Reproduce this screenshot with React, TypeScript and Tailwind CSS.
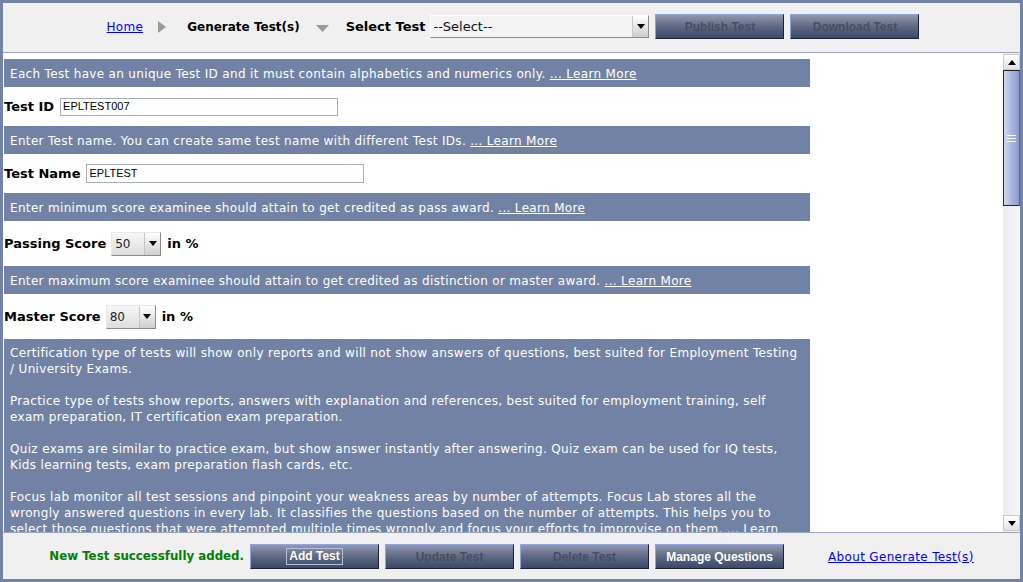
import React from "react";

const FONT = { fontFamily: '"DejaVu Sans", Verdana, sans-serif' };
const BTN_FONT = { fontFamily: '"Liberation Sans", Arial, sans-serif' };

function Btn({ label, enabled, focus }: { label: string; enabled?: boolean; focus?: boolean }) {
  return (
    <div
      style={BTN_FONT}
      className="w-[129px] h-[25px] shrink-0 flex items-center justify-center border border-t-[#8fa3e6] border-l-[#8fa3e6] border-b-[#1c2232] border-r-[#1c2232] bg-gradient-to-b from-[#9399ab] via-[#5f6984] to-[#3b4868] text-[12px] font-bold"
    >
      <span
        className={
          (enabled ? "text-white " : "text-[#474e62] ") +
          (focus ? "border border-[#b9c1da] px-[2px] leading-[15px]" : "")
        }
      >
        {label}
      </span>
    </div>
  );
}

function Arrow({ up }: { up?: boolean }) {
  return (
    <svg width="8" height="5" viewBox="0 0 8 5">
      <polygon points={up ? "0,5 8,5 4,0" : "0,0 8,0 4,5"} fill="#000" />
    </svg>
  );
}

function SmallSelect({ value }: { value: string }) {
  return (
    <div className="w-[50px] h-[24px] shrink-0 flex border border-t-[#e8e8e8] border-l-[#e8e8e8] border-b-[#8a8a8a] border-r-[#8a8a8a] bg-gradient-to-b from-[#f6f6f6] to-[#dedede]">
      <div className="flex-1 pl-[3px] text-[12px] text-[#222] flex items-center">{value}</div>
      <div className="w-[16px] flex items-center justify-center border-l border-[#c4c4c4] bg-gradient-to-b from-white to-[#cfcfcf]">
        <Arrow />
      </div>
    </div>
  );
}

function Bar({ children }: { children: React.ReactNode }) {
  return (
    <div className="ml-[1px] w-[806px] h-[28px] bg-[#7282a5] text-white text-[12px] tracking-[0.33px] flex items-center px-[6px] pt-[1px] whitespace-nowrap">
      {children}
    </div>
  );
}

function LearnMore({ text = "... Learn More" }: { text?: string }) {
  return <span className="underline">{text}</span>;
}

export default function App() {
  return (
    <div style={FONT} className="w-[1023px] h-[582px] bg-[#7383a6] p-[3px] overflow-hidden">
      <div className="w-[1017px] h-[576px] flex flex-col">
        {/* top bar */}
        <div className="h-[50px] shrink-0 bg-[#f0f0f0] border-b border-[#9aa5c2] flex items-center justify-center pb-[2px]">
          <a className="text-[12px] tracking-[0.3px] text-[#0000ff] underline ml-[3px]">Home</a>
          <svg className="ml-[15px]" width="8" height="12" viewBox="0 0 8 12">
            <polygon points="0,0 8,6 0,12" fill="#9a9a9a" />
          </svg>
          <span className="ml-[21px] text-[12px] font-bold text-black">Generate Test(s)</span>
          <svg className="ml-[16px] mt-[3px]" width="13" height="7" viewBox="0 0 13 7">
            <polygon points="0,0 13,0 6.5,7" fill="#9a9a9a" />
          </svg>
          <span className="ml-[17px] text-[13px] font-bold text-black">Select Test</span>
          <div className="ml-[5px] w-[219px] h-[23px] flex border border-t-[#ffffff] border-l-[#ffffff] border-b-[#8c8c8c] border-r-[#8c8c8c] bg-[#f3f3f3]">
            <div className="flex-1 pl-[2px] text-[13px] text-[#111] flex items-center">--Select--</div>
            <div className="w-[16px] flex items-center justify-center border-l border-[#c8c8c8] bg-gradient-to-b from-white to-[#cdcdcd]">
              <Arrow />
            </div>
          </div>
          <div className="ml-[6px] flex gap-[6px]">
            <Btn label="Publish Test" />
            <Btn label="Download Test" />
          </div>
        </div>

        {/* content */}
        <div className="h-[479px] shrink-0 flex bg-white">
          <div className="w-[1000px] h-full overflow-hidden pt-[6px]">
            <Bar>
              Each Test have an unique Test ID and it must contain alphabetics and numerics only.&nbsp;<LearnMore />
            </Bar>
            <div className="h-[39px] flex items-center ml-[1px]">
              <span className="text-[13px] font-bold text-black">Test ID</span>
              <div style={BTN_FONT} className="ml-[6px] w-[278px] h-[18px] border border-[#a7adba] bg-white text-[11px] text-black flex items-center pl-[2px]">
                EPLTEST007
              </div>
            </div>
            <Bar>
              Enter Test name. You can create same test name with different Test IDs.&nbsp;<LearnMore />
            </Bar>
            <div className="h-[39px] flex items-center ml-[1px]">
              <span className="text-[13px] font-bold text-black">Test Name</span>
              <div style={BTN_FONT} className="ml-[6px] w-[278px] h-[19px] border border-[#a7adba] bg-white text-[11px] text-black flex items-center pl-[2px]">
                EPLTEST
              </div>
            </div>
            <Bar>
              Enter minimum score examinee should attain to get credited as pass award.&nbsp;<LearnMore />
            </Bar>
            <div className="h-[45px] flex items-center ml-[1px]">
              <span className="text-[13px] font-bold text-black">Passing Score</span>
              <div className="ml-[5px]">
                <SmallSelect value="50" />
              </div>
              <span className="ml-[6px] text-[13px] font-bold text-black">in %</span>
            </div>
            <Bar>
              Enter maximum score examinee should attain to get credited as distinction or master award.&nbsp;<LearnMore />
            </Bar>
            <div className="h-[45px] flex items-center ml-[1px]">
              <span className="text-[13px] font-bold text-black">Master Score</span>
              <div className="ml-[5px]">
                <SmallSelect value="80" />
              </div>
              <span className="ml-[6px] text-[13px] font-bold text-black">in %</span>
            </div>
            <div className="ml-[1px] w-[806px] bg-[#7282a5] text-white text-[12px] tracking-[0.33px] leading-[16px] px-[6px] pt-[6px] pb-[8px] whitespace-nowrap flex flex-col gap-[16px]">
              <p>
                Certification type of tests will show only reports and will not show answers of questions, best suited for Employment Testing
                <br />/ University Exams.
              </p>
              <p>
                Practice type of tests show reports, answers with explanation and references, best suited for employment training, self
                <br />exam preparation, IT certification exam preparation.
              </p>
              <p>
                Quiz exams are similar to practice exam, but show answer instantly after answering. Quiz exam can be used for IQ tests,
                <br />Kids learning tests, exam preparation flash cards, etc.
              </p>
              <p>
                Focus lab monitor all test sessions and pinpoint your weakness areas by number of attempts. Focus Lab stores all the
                <br />wrongly answered questions in every lab. It classifies the questions based on the number of attempts. This helps you to
                <br />select those questions that were attempted multiple times wrongly and focus your efforts to improvise on them.&nbsp;
                <LearnMore text="... Learn" />
                <br />
                <LearnMore text="More" />
              </p>
            </div>
          </div>

          {/* scrollbar */}
          <div className="w-[17px] h-full flex flex-col pt-[1px] bg-gradient-to-r from-[#ececf0] to-[#f7f7f9]">
            <div className="h-[16px] shrink-0 flex items-center justify-center border border-[#c9c9cf] bg-gradient-to-b from-[#ffffff] to-[#e2e2e6]">
              <Arrow up />
            </div>
            <div className="h-[136px] shrink-0 flex items-center justify-center border border-[#26282e] border-r-[#5c6480] bg-gradient-to-r from-[#d2d9f2] via-[#a9b5df] to-[#8e9bcb]">
              <div className="flex flex-col gap-[2px]">
                <div className="w-[9px] h-[1px] bg-white" />
                <div className="w-[9px] h-[1px] bg-white" />
                <div className="w-[9px] h-[1px] bg-white" />
              </div>
            </div>
            <div className="flex-1" />
            <div className="h-[16px] shrink-0 flex items-center justify-center border border-[#c9c9cf] bg-gradient-to-b from-[#ffffff] to-[#e2e2e6] mb-[1px]">
              <Arrow />
            </div>
          </div>
        </div>

        {/* bottom bar */}
        <div className="h-[47px] shrink-0 bg-[#f0f0f0] border-t border-[#9aa5c2] flex items-center justify-center pt-[1px]">
          <span className="text-[11.8px] font-bold text-[#008000]">New Test successfully added.</span>
          <div className="ml-[6px] flex gap-[6px]">
            <Btn label="Add Test" enabled focus />
            <Btn label="Update Test" />
            <Btn label="Delete Test" />
            <Btn label="Manage Questions" enabled />
          </div>
          <a className="ml-[44px] text-[12px] tracking-[0.33px] text-[#0000ff] underline">About Generate Test(s)</a>
        </div>
      </div>
    </div>
  );
}
